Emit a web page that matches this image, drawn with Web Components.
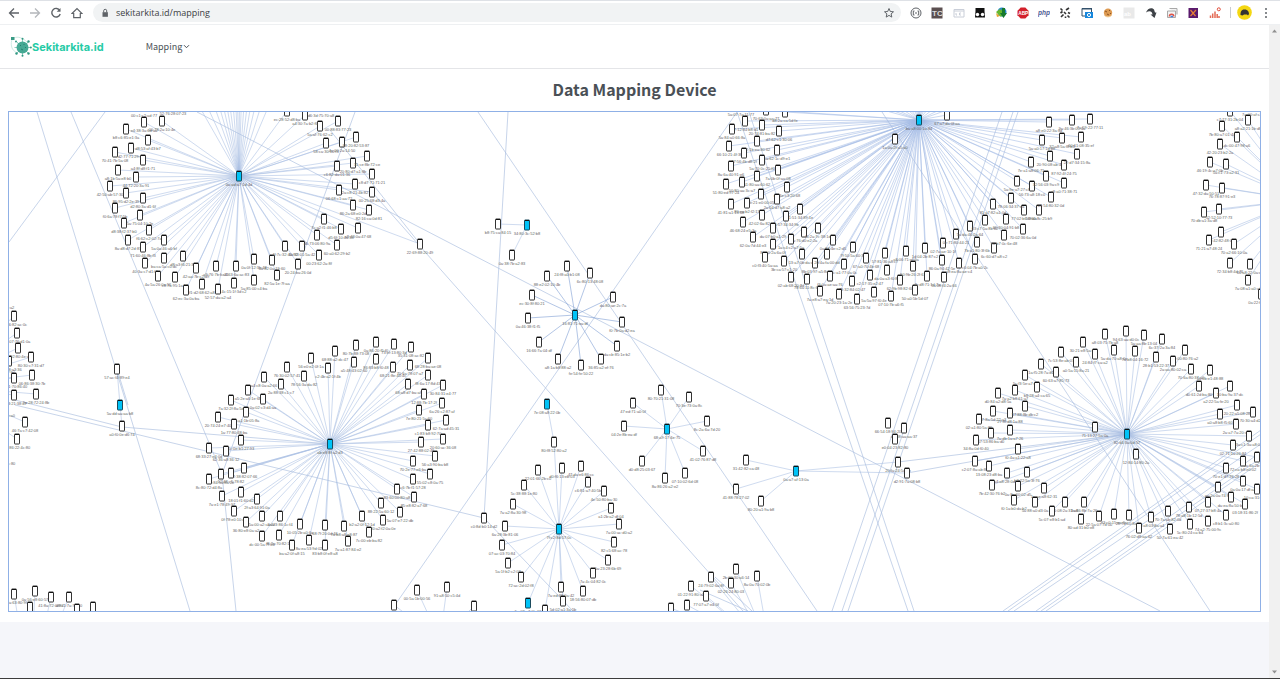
<!DOCTYPE html>
<html lang="en">
<head>
<meta charset="utf-8">
<title>Sekitarkita.id - Data Mapping Device</title>
<style>
  html, body { margin: 0; height: 100%; }
  body { font-family: "Noto Sans CJK SC", "Noto Sans", sans-serif; color: #4a5056; background: #f5f6fa; }
</style>
</head>
<body>
<app-window>
  <browser-bar slot="bar" address="sekitarkita.id/mapping"></browser-bar>
  <site-header><span slot="menu">Mapping</span></site-header>
  <map-card><span slot="title">Data Mapping Device</span><device-graph></device-graph></map-card>
</app-window>
<script>
const define = (name, html, setup) => customElements.define(name, class extends HTMLElement {
  constructor() {
    super();
    this.attachShadow({ mode: 'open' }).innerHTML = html;
  }
  connectedCallback() { if (setup) setup(this, this.shadowRoot); }
});

define('app-window', `
<style>
  :host { display: flex; flex-direction: column; min-height: 100vh; box-sizing: border-box; border-bottom: 1px solid #3c3c3c; }
  .view { flex: 1; display: flex; }
  main { flex: 1; min-width: 0; }
  .scroll { width: 11px; background: #f1f1f1; display: flex; flex-direction: column; justify-content: space-between; align-items: center; padding: 4px 0; box-sizing: border-box; }
  svg { width: 5px; height: 4px; display: block; }
</style>
<slot name="bar"></slot>
<div class="view">
  <main><slot></slot></main>
  <div class="scroll">
    <svg viewBox="0 0 5 4"><path d="M0 3.5 2.5.5 5 3.500z" fill="#909090"/></svg>
    <svg viewBox="0 0 5 4"><path d="M0 .5h5L2.500 3.500z" fill="#909090"/></svg>
  </div>
</div>`);

define('browser-bar', `
<style>
  :host { display: flex; align-items: center; height: 25px; box-sizing: border-box; background: #fff; border-top: 1px solid #dee1e6; border-bottom: 1px solid #eef0f2; padding: 0 10px 0 8px; gap: 6px; }
  button { all: unset; display: grid; place-items: center; width: 12px; height: 12px; flex: none; }
  svg { display: block; width: 12px; height: 12px; fill: none; stroke: #5f6368; }
  nav { display: flex; gap: 9px; }
  .omni { flex: 1; min-width: 0; display: flex; align-items: center; gap: 5px; height: 19px; border-radius: 10px; background: #f1f3f4; padding: 0 6px; margin-left: 4px; }
  input { all: unset; flex: 1; min-width: 0; font: 9px "Open Sans", "Noto Sans", sans-serif; color: #3c4043; }
  .lock { width: 12px; }
  .ext { display: flex; justify-content: space-between; width: 311px; margin-left: 3px; }
  .sep { width: 1px; height: 11px; background: #c8cbd0; margin-left: 3px; }
  .me { width: 15px; height: 15px; } .me svg { width: 15px; height: 15px; }
  text { font-family: "Liberation Sans", sans-serif; font-weight: bold; stroke: none; }
</style>
<nav>
  <button aria-label="Back"><svg viewBox="0 0 12 12" stroke-width="1.300"><path d="M11 6H1.500M6 1.500 1.500 6 6 10.500"/></svg></button>
  <button aria-label="Forward"><svg viewBox="0 0 12 12" stroke-width="1.300" style="stroke:#b4b7bb"><path d="M1 6h9.500M6 1.500 10.500 6 6 10.500"/></svg></button>
  <button aria-label="Reload"><svg viewBox="0 0 12 12" stroke-width="1.400"><path d="M9.800 3.500A4.300 4.300 0 1 0 10.200 7"/><path d="M10.500 1v3.800H6.700z" fill="#5f6368" stroke="none"/></svg></button>
  <button aria-label="Home"><svg viewBox="0 0 12 12" stroke-width="1.200"><path d="M1 6.500 6 1.500l5 5H9.300v4.200H2.700V6.500z"/></svg></button>
</nav>
<div class="omni">
  <svg class="lock" viewBox="0 0 12 12"><path d="M3.500 5.200h5.400v4.600H3.500z" fill="#5f6368" stroke="none"/><path d="M4.700 5.500V3.800a1.500 1.500 0 0 1 3 0v1.700"/></svg>
  <input aria-label="Address" type="text">
  <button aria-label="Bookmark"><svg viewBox="0 0 12 12"><path d="m6 1.500 1.300 3 3.200.3-2.400 2.100.7 3.200L6 8.400l-2.800 1.700.7-3.200L1.500 4.800l3.200-.3z"/></svg></button>
</div>
<div class="ext">
  <button aria-label="Brackets"><svg viewBox="0 0 12 12"><circle cx="6" cy="6" r="5"/><path d="M4.500 4H3.300v4h1.200M7.500 4h1.200v4H7.500M5 6h2"/></svg></button>
  <button aria-label="TC"><svg viewBox="0 0 12 12"><path d="M.5.5h11v11H.5z" fill="#5b4f50" stroke="none"/><text x="1" y="9" font-size="8" fill="#ddd">TC</text></svg></button>
  <button aria-label="Window"><svg viewBox="0 0 12 12" style="stroke:#c9ced8"><path d="M1 2.500h10v7.500H1zM1 4h10M3 6v2h1M8 6H6.500v2H8"/></svg></button>
  <button aria-label="Monkey"><svg viewBox="0 0 12 12"><path d="M1.500 1h9v3l.5 6.500H1L1.500 4z" fill="#111" stroke="none"/><circle cx="3.500" cy="7.500" r="1.700" fill="#fff" stroke="none"/><circle cx="8.500" cy="7.500" r="1.700" fill="#fff" stroke="none"/></svg></button>
  <button aria-label="Downloader"><svg viewBox="0 0 12 12" stroke="none"><circle cx="7" cy="5" r="4.500" fill="#2688c9" stroke="none"/><path d="M1 5 5 2l4 3-3 5z" fill="#66b82d" stroke="none"/><path d="M7 1h3v5h2L8.500 11 5 6h2z" fill="#177a2e" stroke="none"/><path d="m1 6 4 3-3 1z" fill="#e5a72c" stroke="none"/></svg></button>
  <button aria-label="ABP"><svg viewBox="0 0 12 12"><path d="M3.700.5h4.600l3.200 3.200v4.600l-3.200 3.200H3.700L.5 8.300V3.700z" fill="#d3202b" stroke="none"/><text x="1.200" y="7.800" font-size="4.800" fill="#fff">ABP</text></svg></button>
  <button aria-label="php"><svg viewBox="0 0 12 12"><text x="0" y="7.500" font-size="6.500" font-style="italic" fill="#4d5b93">php</text></svg></button>
  <button aria-label="Tools"><svg viewBox="0 0 12 12" style="stroke:#333" stroke-width="1.600"><path d="m1.500 1.500 2 2M5 5l2 2M8.500 8.500l2 2M1.500 6l2-1.500M7 3l3-2M2 10l2.500-2.500M9 5.500l2 1M6.500 9.500v1.500"/></svg></button>
  <button aria-label="Screenshot"><svg viewBox="0 0 12 12"><path d="M1 1.500h9.500V9H1z" fill="#fff" stroke="#33516b"/><path d="M1 1h10v1.500H1z" fill="#33516b" stroke="none"/><path d="M4 5h8v6H4z" fill="#1687dd" stroke="none"/><circle cx="8" cy="8" r="1.600" stroke="#fff"/></svg></button>
  <button aria-label="Cookie"><svg viewBox="0 0 12 12"><circle cx="6" cy="5.800" r="4.200" fill="#dd9a52" stroke="none"/><path d="m3 4 2 1M7 3l1 1M5 7l2 1M8.500 6v1" stroke="#8c5422"/><path d="M2 8c2 2.500 6 2.500 8 0" stroke="#f3cf9d"/></svg></button>
  <button aria-label="Reader"><svg viewBox="0 0 12 12"><path d="M.5.5h11v11H.5z" fill="#e9e9e9" stroke="none"/><text x="1" y="8.500" font-size="6" fill="#fff">ab</text></svg></button>
  <button aria-label="Redirect"><svg viewBox="0 0 12 12"><path d="M1 5.500C2.500 1 7 0 9 2.500l1 3h1.500L9.500 11 5.500 7.500h2C7 4 4.500 3.500 1 5.500z" fill="#3e4247" stroke="none"/></svg></button>
  <button aria-label="Capture"><svg viewBox="0 0 12 12"><path d="M3.500 1.500h7.500v6M1.500 4h8v6.500h-8z" stroke="#a8a8a8" fill="#f3f3f3"/><path d="M3.300 9.500a2.300 2.300 0 0 1 4.600 0" stroke="#df5548" stroke-width="1.400"/><path d="M4.500 9.500h2.500" stroke="#3f80e2" stroke-width="1.500"/></svg></button>
  <button aria-label="Purple tool"><svg viewBox="0 0 12 12"><path d="M1.500 1h9.500v10H1.500z" fill="#5a1a6d" stroke="none"/><path d="m3.500 3 5 6M9 3 3.500 9" stroke="#e57f34" stroke-width="1.200"/></svg></button>
  <button aria-label="Statistics"><svg viewBox="0 0 12 12"><path d="M1.500 11V8.500M3.700 11V6.500M6 11V4.500M8.200 11V7M10 11V9" stroke="#e46b56" stroke-width="1.500"/><circle cx="9.800" cy="2.300" r="1.500" stroke="#df4a37"/></svg></button>
</div>
<span class="sep"></span>
<button class="me" aria-label="Profile"><svg viewBox="0 0 15 15"><circle cx="7.500" cy="7.500" r="7.300" fill="#f4d712" stroke="none"/><path d="M3.500 10c0-3 .5-5.500 4-5.500S12 7 12 9l-1 1.500-1-1H7L5.500 10.500z" fill="#333" stroke="none"/></svg></button>
<button aria-label="Menu"><svg viewBox="0 0 12 12"><g fill="#5f6368" stroke="none"><circle cx="8" cy="2" r="1"/><circle cx="8" cy="6" r="1"/><circle cx="8" cy="10" r="1"/></g></svg></button>
`, (el, root) => { root.querySelector('input').value = el.getAttribute('address'); });

define('site-header', `
<style>
  :host { display: flex; align-items: center; gap: 42px; height: 43px; background: #fff; border-bottom: 1px solid #e4e5e8; padding-left: 10px; }
  a { color: inherit; text-decoration: none; display: flex; align-items: center; }
  .logo { color: #26cba6; font: bold 11px Inter, "Open Sans", sans-serif; }
  .logo svg { width: 22px; height: 22px; }
  button { all: unset; display: flex; align-items: center; gap: 1px; font-size: 9px; line-height: 16px; }
  button svg { width: 7px; height: 7px; }
</style>
<a class="logo" href="#"><svg viewBox="0 0 22 22"><path d="M2.500 2C0 8 1 15 8 17M4 2c4-2 9 0 13 4" fill="none" stroke="#cdebe3"/><path d="M1 1h3.500v3H1z" fill="#399b85"/><g stroke="#8fcdbf"><path d="M12.500 3v16M4.500 11.500h17M7 6l11 11M18 6 7 17" stroke-width="1"/></g><circle cx="12.500" cy="11.500" r="6" fill="#46a994"/><path d="m10 9 1 1M14 8v1M11 13l2 1M15 11l1 1" stroke="#267e70"/><g fill="#319782"><circle cx="12.500" cy="2.800" r="1"/><circle cx="12.500" cy="19.800" r="1"/><circle cx="18.500" cy="5.500" r="1.200"/><circle cx="6.500" cy="17.500" r="1.200"/><circle cx="18.500" cy="17.500" r="1.200"/><circle cx="6" cy="5.500" r="1"/><circle cx="20.800" cy="11.500" r="1"/></g></svg>Sekitarkita.id</a>
<button aria-haspopup="true"><slot name="menu"></slot><svg viewBox="0 0 7 7"><path d="m1 2.200 2.500 2.500L6 2.200" fill="none" stroke="#4a5056"/></svg></button>
`);

define('map-card', `
<style>
  :host { display: block; background: #fff; padding: 8px 8px 10px; }
  h1 { margin: 0 0 10px; font-size: 16px; line-height: 24px; font-weight: 600; text-align: center; }
</style>
<h1><slot name="title"></slot></h1><slot></slot>`);

/* Each group: an optional hub, its devices as "x,y[,label]", a link colour.
   A device without a label shows a short address made from its position. */
const groups = [
  { hub: '239,176,0a:ad:a7:1d:4d', nodes: `144,122,e4:38:3a:6d:aa 162,121,00:78:2a:10:4e 126,129,b8:c6:85:e1:3a 148,140,d8:53:af:43:b7 131,148,d2:77:71:29:0e 115,152,70:41:7b:5a:08 143,160,a4:8f:d8:f1:71 118,170,a8:1b:5a:e8:b0 136,177,44:72:20:3a:91 110,186,42:50:ab:57:30 126,193,86:95:d2:2e:39 143,198,d2:80:3a:d1:6f 115,208,f0:6a:78:f7:5b 140,215,5a:75:04:10:2e 124,223,d8:38:f2:37:b0 149,230,f6:62:c2:02:7a 128,240,8a:d8:d7:2d:87 143,247,71:60:46:8b:f3 164,240,5a:0a:46:a6:bf 145,263,40:3a:c7:d1:f4 164,258,ba:ca:5a:c0:dc 183,256,d8:a3:f6:21:35 158,276,4a:5a:26:0a:56 175,277,c8:7a:95:1a:52 196,268,42:aa:7b:c2:d9 216,266 186,290,62:ec:3a:0a:ba 202,284,f1:d2:68:62:a8 218,289,52:57:da:a2:a4 236,266,a4:63:6a:ac:83 234,283,4c:15:1f:3d:c2 254,280,5a:85:00:c4:ba 254,259,0a:0f:12:3b:48 272,260,0a:82:0a:19:60 277,275,82:5a:1e:7f:aa 285,246,4f:7c:32:40:92 298,264,20:24:ba:26:0d 302,246,6a:33:01:5a:42 319,255,00:23:62:2a:8f 317,235,d6:73:06:80:9a 337,245,60:a0:62:29:b2 324,219,7c:a2:f1:46:b8 341,229,d5:6f:10:4a:38 358,228,a8:43:0a:47:68 353,205,86:2a:68:e0:2d 369,210,82:16:ca:0d:81 339,190,06:68:c1:aa:72 355,184,2a:c8:21:4b:82 372,192,00:25:68:d3:4a 372,174,c8:d7:71:71:21 337,166,c6:82:da:01:36 353,163,20:80:d7:a1:8b 367,156,31:ce:8b:72:ce 326,143,58:ca:30:10:f3 342,142,4a:00:2a:14:50 356,137,88:20:82:53:87 338,121,00:88:83:77:23 320,126,5a:af:76:62:c2 305,115,a4:30:7a:b2:f6 287,111,ec:28:52:d8:ba 420,244,22:69:88:20:49`,
    far: [150,168,184,195,204,212,219,226,232,236,240,244,250,257,265,275,288,305] },
  { hub: '919,120,ba:a8:00:1a:84', color: '#a3bbe6', nodes: `745,121,67:12:84:b8:d1 732,129,5a:84:a0:66:8a 762,125,20:74:81:ba:82 779,131,d7:62:c1:30:06 729,146,66:10:21:4f:3f 757,141,22:1b:ea:30:62 744,153,77:56:4b:d8:2f 777,150,ea:62:1c:d9:e1 762,160,5a:70:0c:25:f0 731,166,8a:6a:40:91:e6 778,170,7a:0b:0f:aa:08 757,176,51:80:aa:60:62 726,184,51:80:ed:97:24 742,182,50:80:aa:3c:a7 787,187,eb:4e:c3:20:68 761,194,ce:21:e0:00:05 731,204,41:81:a1:13:08 747,203,80:ea:b2:f2:13 777,199,2a:04:d7:a8:a2 800,209,c1:51:34:89:1e 762,215,42:02:6a:82:c4 786,216,f8:57:34:34:9b 743,222,46:68:24:e5:3a 773,228,da:07:b0:a1:29 804,232,0a:76:d0:e2:2a 818,228,f6:2a:7c:38:1d 753,237,62:0a:7d:44:e3 773,244,8a:c0:2a:6a:0f 791,239,1a:c4:c2:a7:5a 833,240,0a:87:4e:c2:d5 765,257,c0:f3:40:5a:aa 784,261,3b:ca:57:c1:20 802,254,13:a7:0b:da:d2 815,263,8b:03:97:a5:8c 827,254,20:4a:fa:00:dd 853,247,7f:50:5a:60:31 844,264,4c:a1:77:0a:0c 866,258,67:a0:70:4b:68 791,277,02:ab:68:20:8d 807,279,78:6a:11:8c:66 830,276,f3:0a:ae:aa:76 852,281,78:32:84:02:47 870,275,c2:17:35:e2:47 887,270,da:0a:a3:f0:89 885,253,57:81:36:a8:c7 906,251,a8:06:71:ef:0a 900,280,62:9b:98:82:60 820,291,7a:e8:a7:ea:1d 839,294,7a:20:23:1a:2e 857,299,63:56:75:23:7d 874,292,5a:5a:97:f0:4e 891,296,07:10:7b:a6:f5 915,290,50:a0:5b:5d:07 913,266,50:9b:26:2f:61 925,248,1d:04:2b:87:c2 943,243,02:7a:ae:10:1f 942,260,86:0a:94:42:5e 927,276,db:d8:71:1d:7a 944,277,5a:08:f4:2a:66 959,263,c8:ea:8a:ae:c4 956,234,0e:71:80:44:21 970,226,5a:da:46:2a:64 975,259,c6:04:7b:a0:2c 977,242,7b:a1:80:3f:6b 994,248,6c:60:d7:a8:c2 985,220,03:c7:5a:8b:62 993,204,81:a7:82:a1:0d 1004,235,90:b7:0c:6e:48 1006,219,66:30:04:91:b8 1023,229,70:02:36:6a:0d 1024,210,77:02:b6:f8:da 1039,210,50:60:8c:25:b9 1011,198,78:06:34:37:ea 1017,181,5a:9e:a7:27:c8 1032,186,56:73:a8:18:c0 1051,197,07:54:80:32:0d 1064,183,e8:a0:71:38:71 1046,176,32:56:03:9a:c9 1031,162,7e:a1:a8:06:71 1050,156,20:90:08:ab:48 1064,165,87:92:4f:24:75 1077,154,22:d7:34:15:8a 1042,140,5a:a0:17:1d:b8 1062,138,32:a8:5a:f8:b3 1081,137,60:61:08:35:ef 1049,122,a8:e0:22:3a:8d 1072,120,9a:46:3b:05:4a 1090,119,7a:59:22:77:11 895,139,1a:0a:2f:a5:a0 947,115,67:a7:da:0f:aa 785,112,d8:2a:ca:5d:fe 766,110,70:63:0a:aa:77`,
    far: [560,640,700,760,810,840,870,890,905,915,925,935,950,970,1000,1050,1120,1200] },
  { origin: [1300, 200], nodes: `1230,111,c7:77:31:2b:04 1248,120,a8:a2:21:1b:d8 1222,126,7b:80:a7:01:44 1237,137,dc:00:47:98:a6 1220,144,42:20:23:b2:2a 1210,162,46:19:4c:a7:0b 1226,164,5a:c1:73:a2:31 1206,185,47:32:da:50:51 1222,188,76:78:87:91:e3 1204,212,70:db:a1:3a:d8 1219,209,52:52:10:77:73 1221,232,83:42:82:48:07 1209,240,71:21:a7:48:24 1234,244,70:a2:66:10:0a 1230,263,72:34:b8:4d:76 1250,264,66:a8:22:0a:c8 1248,280,7a:08:a1:a0:a4 1261,294,0a:22:f8:6a:10` },
  { origin: [-60, 386], nodes: `14,316,13:06:82:ac:0c 17,333,62:07:76:d1:0a 18,348,73:92:80:4e:d0 31,357,80:30:c7:31:d7 9,361,fd:82:08:a3:36 32,375,06:86:38:30:7b 14,378,ba:c1:70:86:40 14,395,fa:b3:21:38:a7 36,394,9a:28:72:24:8b 25,422,46:7a:c7:42:08 17,439,d8:86:22:4c:80` },
  { origin: [30, 690], nodes: `14,594,a0:2a:63:80:9f 35,591,0a:56:e8:60:57 51,597,41:8a:72:0f:87 69,597,a8:a1:7a:73:e0 30,607 77,609 93,607` },
  { hub: '120,405,5a:dd:aa:aa:b8', nodes: `117,369,57:ac:f4:89:e4 122,426,a0:f0:0e:d6:74` },
  { hub: '330,444,ab:e8:8f:a2:d3', nodes: `356,345,80:7b:88:73:08 376,342,0a:86:20:f5:f0 394,344,73:ef:13:80:3d 411,347,35:31:08:ac:82 428,358,68:28:ba:ae:08 335,351,68:88:a2:dc:47 354,362,a5:48:43:02:60 376,359,86:83:b8:f0:48 393,367,68:21:8e:40:4c 410,365,70:6a:78:07:a7 428,375,f8:6a:17:8d:43 311,358,56:e0:e2:0f:1a 328,368,c2:4b:a2:1f:4b 287,367,76:30:02:57:41 304,376,78:56:3a:da:82 264,377,a4:c8:0a:a2:66 281,384,2a:88:38:c1:c7 408,384,68:a8:d7:ba:af 424,394,12:88:7b:17:2f 443,385,30:84:31:e4:77 248,390,a5:2e:a6:1e:68 263,399,0a:02:c3:d4:aa 442,403,6a:26:c2:87:af 231,400,7a:32:2f:8a:5d 419,410,7e:80:21:5c:60 446,420,62:7a:ad:45:31 246,412,4e:a1:1b:05:8a 218,417,20:74:24:e7:40 234,424,1a:77:80:48:ba 428,425,c1:83:b8:92:70 241,440,5c:0e:b1:27:93 421,442,27:42:88:02:46 443,439,20:60:ac:36:08 209,448,68:33:27:e4:0d 226,451,62:36:a8:36:12 435,456,56:a3:90:ba:b8 413,461,70:2e:77:e6:ba 244,468,22:38:82:07:66 231,473 221,474,ea:84:5a:8a:2e 209,479,8c:80:72:d4:8a 430,474,55:02:c8:0a:75 413,479,c6:7b:f1:57:28 397,489,83:60:00:80:a8 222,496,7a:e1:78:49:97 241,492,18:01:f1:60:d2 257,499,2f:a3:64:91:0a 414,497,85:e8:82:a7:68 381,503,88:22:5a:60:12 234,511,0f:78:e0:10:a0 400,512,5a:07:e7:22:db 262,516,5a:00:a2:c3:42 280,516,aa:e3:86:1c:f4 362,516,b2:a2:0f:12:1d 383,520,80:a2:f2:0a:0e 246,522,36:80:e8:0a:a2 300,524,10:05:2b:a0:6a 325,525,68:7f:20:0d:46 344,526,7a:b8:a8:e8:87 369,532,7c:00:eb:ba:82 262,536,dc:00:5a:7f:06 279,535,f8:2a:70:82:10 309,540,8a:ea:53:9d:02 348,541,7a:a1:87:84:e2 292,545,ba:a2:0f:a8:15 325,545,83:b8:0f:e8:a8` },
  { origin: [440, 640], nodes: `394,605 417,590,00:5a:1b:00:56 447,587,91:a8:50:c5:4d 474,606` },
  { hub: '575,315,16:81:71:ea:df', color: '#7698d2', nodes: `567,266,24:f8:a0:b1:08 590,273,6c:80:13:48:08 547,276,88:e2:02:10:4b 532,295,ec:30:8f:80:21 613,297,da:80:ae:2c:7a 528,318,0a:46:38:f1:f5 622,322,f0:7b:0a:d2:ea 539,342,16:66:7a:04:df 617,346,da:cb:85:1e:b2 558,359,a8:1a:b8:88:a2 601,359,36:85:a2:ef:76 581,365,fe:54:fe:50:22` },
  { hub: '527,225,34:80:3c:52:b8', nodes: `498,224,b8:75:ca:84:15 512,255,0a:38:7b:a2:83` },
  { hub: '667,429,68:a9:17:4e:75', nodes: `661,390,80:70:21:31:08 689,397,70:3e:73:0a:8c 633,403,47:ed:71:a0:0f 624,426,04:2e:8b:ea:df 707,421,8c:2a:6a:7d:20 642,461,d0:d8:25:03:67 703,451,41:02:76:87:d8 665,478,8a:86:26:a2:e2 685,473,07:10:02:6d:08` },
  { hub: '547,404,7e:08:a8:22:0b', nodes: '554,442,80:f8:52:80:a2' },
  { hub: '559,529,7f:c2:8d:57:0c', nodes: `554,442 538,470,22:01:66:2b:c0 562,468,d0:f6:13:eb:03 581,466,47:da:e6:86:cc 524,485,5c:38:88:1e:80 588,482,c6:81:a7:40:5b 604,491,4e:50:80:ba:30 513,504,7a:a2:8a:30:98 611,508,a1:2b:a2:df:04 505,526,6a:28:3b:81:06 619,524,7a:00:ac:d0:a2 502,545,07:ac:03:70:84 614,542,82:c5:68:ac:78 508,563,5a:1f:b2:c2:02 608,560,5a:23:28:6b:69 521,577,72:ac:2d:02:f8 593,573,7a:4c:04:82:0c 561,587,7a:ed:88:0a:42 583,591,18:56:80:07:db 563,601,5d:02:a1:3a:5b 545,610` },
  { hub: '528,603,5a:08:a7:0b:62', nodes: '559,529' },
  { origin: [770, 650], nodes: `736,569,2b:00:30:a6:14 711,577,24:79:02:6a:8f 757,576,8a:0a:70:02:0b 731,583,02:26:24:80:03 691,586,01:22:91:80:a0 706,596,77:07:a7:e4:0f 687,605 671,608` },
  { hub: '796,471,0a:a7:af:13:0a', nodes: `746,460,31:42:82:ca:48 736,489,41:88:78:27:02 761,501,80:20:a1:9a:b8 898,462,20:fa:24:5a:6b 907,473,d2:91:7a:08:b8` },
  { nodes: `888,423,66:54:18:94:20 904,428,a7:d8:aa:aa:37 895,439,e0:04:23:82:80 484,518,c0:8d:b0:14:d2` },
  { hub: '1127,434,82:d4:3a:0d:57', nodes: `1105,334,a8:03:75:7b:a8 1126,331,94:63:aa:d0:0c 1144,335,5a:aa:8b:13:04 1162,339,6c:37:2a:3a:84 1185,350,60:00:80:76:a2 1083,342,30:21:e8:5a:8d 1061,352,7c:53:8e:ab:07 1095,354,24:84:f7:ca:a2 1114,350,5a:da:70:a8:0e 1135,351,7a:b8:04:16:72 1156,357,28:b1:53:22:37 1173,361,2a:aa:80:02:ca 1041,364,1a:f5:28:7a:d5 1076,362,a0:5a:15:8a:21 1191,369,70:6a:80:37:a0 1210,370,5a:0b:e1:48:88 1025,375,5c:f3:5e:a7:af 1056,372,60:63:a7:85:73 998,393,d0:84:a2:d8:5a 1015,390,7a:a2:b8:61:a7 1037,387,b8:28:a4:ca:65 1199,386,d0:61:2d:ba:80 1216,393,a2:22:5a:fe:20 1230,386,10:ba:9a:37:dc 993,411,a7:8a:5d:22:a3 1010,413,27:8f:d8:1a:88 1025,406,57:88:8b:db:c2 1237,405,20:22:a5:08:28 1253,412,70:30:a4:d2:1a 1220,414,a0:a8:b8:f5:60 1236,424,2a:a7:7a:20:ae 979,419,02:a1:80:5a:86 991,433,57:53:86:ba:d0 1010,430,7a:db:1a:a7:26 976,440,34:8a:0d:f0:40 1018,449,f0:4a:a1:22:a8 1249,436,3a:c1:3a:a8:02 1233,445,02:71:1a:26:84 1095,427,71:13:27:5a:0a 1136,454,12:84:14:80:2a 975,461,c2:07:8a:ab:80 989,466,13:08:23:d8:ba 1007,473,a4:a8:28:0d:c3 1027,472,b3:22:5a:3f:76 1257,457,5a:6a:2b:17:84 1243,461,72:ca:b8:e0:02 1226,468,70:e1:d7:76:28 992,485,7b:42:30:76:b2 1018,486,0a:8a:60:02:d5 1044,488,1a:ae:a8:62:31 1243,481,0a:0a:17:df:a4 1218,487,aa:2a:0a:74:8a 1257,489,10:ca:31:07:22 1014,500,f0:1a:b0:da:b2 1035,502,5a:88:a0:d3:0a 1065,502,86:08:2a:31:a8 1084,502,3a:66:8b:7a:26 1208,502,07:27:37:b8:4a 1231,497,da:ea:8a:50:b1 1245,504,03:18:31:86:2f 1052,511,5c:07:e8:b1:ad 1099,516,22:5a:07:7d:00 1114,514,83:c0:15:ea:6a 1129,515,28:74:10:8a:aa 1081,519,80:ad:31:b0:e8 1151,517,da:a8:03:8a:a4 1168,511,70:7a:ab:82:0d 1189,507,78:a8:1b:12:5d 1226,515,c8:b1:3c:a0:80 1208,521,74:a2:75:00:9c 1139,528,76:02:d8:aa:62 1170,529,50:7a:61:ea:42 1190,524,5c:80:24:ca:b4` }
];

/* Links that run between groups or leave the view. */
const links = `105,112,9,242 37,112,190,611 71,112,222,474 222,474,236,611 355,112,222,474
15,400,122,427 122,427,330,444 15,405,484,518 117,369,128,405 197,112,1160,611 330,130,420,244 372,192,743,611
478,112,817,611 737,112,395,605 508,112,484,518 484,518,573,611 737,112,908,611 749,112,914,611
1002,112,832,611 1013,112,842,611 1018,112,848,611 882,112,1210,611 898,462,1127,434 907,473,1127,434
1003,611,1261,430 1008,611,1261,434 1014,611,1261,444 1036,611,1261,452 1041,611,1261,458 1046,611,1261,462
700,590,748,611 715,577,752,611`.split(/\s+/).map(s => s.split(',').map(Number));

const shortAddress = (x, y) => {
  let n = x * 7919 + y * 104729, out = [];
  for (let i = 0; i < 5; i++) { n = (n * 1103515 + 12345) % 2147483647; out.push((n % 256).toString(16).padStart(2, '0')); }
  return out.join(':');
};

define('device-graph', `
<style>
  :host { display: block; height: 499px; border: 1px solid #8fb0e6; background: #fff; overflow: hidden; }
  svg { display: block; width: 100%; height: 100%; }
  line { stroke: #a9bfe4; stroke-width: 1; opacity: .55; }
  .far line { stroke: #abbfe0; opacity: .65; }
  text { font: 4px "Liberation Sans", sans-serif; fill: #666; text-anchor: middle; }
  .phone { fill: #fff; stroke: #333; }
  .hub { fill: #00c3f7; stroke: #1c4a5c; }
</style>
<svg role="img" aria-label="Device map"><g transform="translate(-9 -112)"></g></svg>`, (el, root) => {
  const line = (a, b, c, d, color) => `<line x1="${a}" y1="${b}" x2="${c}" y2="${d}"${color ? ` style="stroke:${color}"` : ''}/>`;
  const seen = new Set();
  let edges = '', marks = '';
  const mark = (x, y, label, kind) => {
    const key = x + ',' + y;
    if (seen.has(key)) return;
    seen.add(key);
    marks += `<rect class="${kind}" x="${x - 2.500}" y="${y - 5}" width="5" height="10" rx="0.500"/><path d="M${x - 2} ${y - 4.500}h4" stroke="#111"/><text x="${x}" y="${y + 10}">${label || shortAddress(x, y)}</text>`;
  };
  for (const g of groups) {
    const hub = g.hub && g.hub.split(',');
    const from = hub ? [+hub[0], +hub[1]] : g.origin;
    if (hub) mark(from[0], from[1], hub[2], 'hub');
    for (const far of g.far || []) edges += line(...from, far, 20, g.color);
    for (const item of g.nodes.trim().split(/\s+/)) {
      const [x, y, label] = item.split(',');
      if (from) edges += line(...from, +x, +y, g.color);
      if (item !== '559,529') mark(+x, +y, label, 'phone');
    }
  }
  const across = links.map(l => line(...l)).join('');
  const stubs = [[5,309,'3a:8c:a:a2'],[6,373,'ba:120:a2'],[6,417,'7f:02:a:a0'],[6,465,'18:6a:c:80'],[144,117,'00:c1:c2:ad:77'],[173,115,'52:76:28:07:23'],[321,117,'d6:3d:75:70:a8'],[741,116,'5a:07:7a:11:77'],[1252,116,'7a:00:af:c2']]
    .map(([x, y, t]) => `<text x="${x}" y="${y}">${t}</text>`).join('');
  root.querySelector('g').innerHTML = `<g class="far">${across}</g><g>${edges}</g>${stubs}${marks}`;
});
</script>
</body>
</html>
